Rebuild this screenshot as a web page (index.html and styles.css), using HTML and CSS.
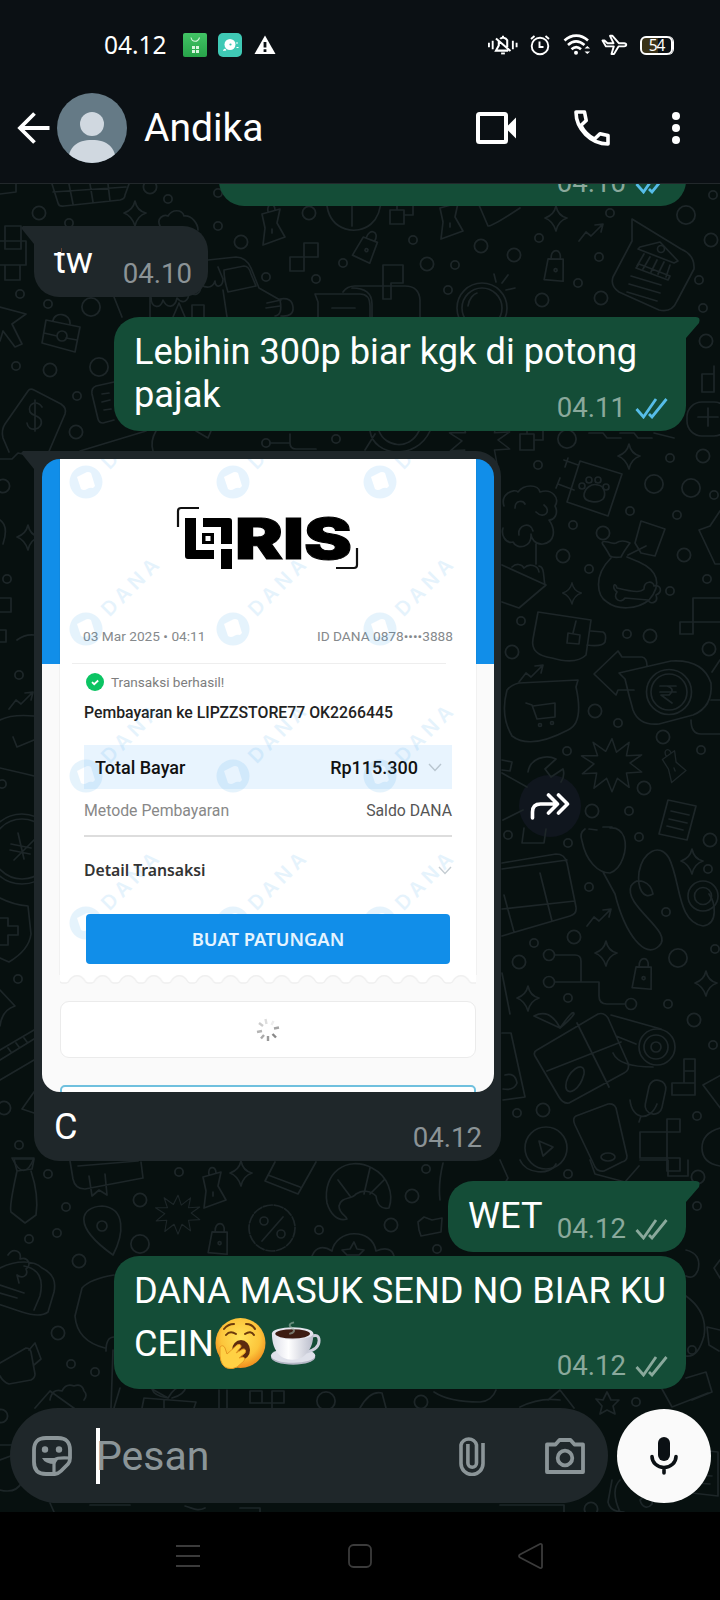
FILE: index.html
```html
<!DOCTYPE html>
<html lang="id">
<head>
<meta charset="utf-8">
<title>Andika</title>
<link rel="stylesheet" href="styles.css">
</head>
<body>
<header class="top">
  <div class="status">
    <span class="clock">04.12</span>
    <svg class="ic-store" width="24" height="24" viewBox="0 0 24 24"><defs><linearGradient id="g1" x1="0" y1="0" x2="0" y2="1"><stop offset="0" stop-color="#42c465"/><stop offset="1" stop-color="#28a44a"/></linearGradient></defs><rect width="24" height="24" rx="2" fill="url(#g1)"/><path d="M8 4.500c1 5 7 5 8.500 0" fill="none" stroke="#d9f5df" stroke-width="1.100"/><path d="M9 13h3v3H9zM13 13h3v3h-3zM9 17h3v3H9zM13 17h3v3h-3z" fill="#d9f5df"/></svg>
    <svg class="ic-app" width="24" height="24" viewBox="0 0 24 24"><rect width="24" height="24" rx="5" fill="#3fc9b5"/><circle cx="12" cy="11.500" r="5.500" fill="#fff"/><circle cx="12.500" cy="11.500" r="1.100" fill="#3fc9b5"/><path d="M5 17l2-1.500 1.500 1.500-1 .8H5zM18 9.500h2v1h-2zM18.500 14h2v1h-2z" fill="#fff"/></svg>
    <svg class="ic-warn" width="22" height="20" viewBox="0 0 22 20"><path d="M11 .5L21.500 19H.5z" fill="#fff"/><path d="M9.600 7h2.800v5.500H9.600zM9.600 14.300h2.800V17H9.600z" fill="#0b1014"/></svg>
    <span class="grow"></span>
    <svg width="30" height="22" viewBox="0 0 32 22" fill="none" stroke="#fff" stroke-width="2"><path d="M1 8.500v5M5 6.500v9M26.500 6.500v9M30.500 8.500v5"/><path d="M11.500 7v4.500L8.500 17h13M13 4.500C14.500 2.500 19 3 20.500 6v7M16 1v2M8.500 4L24 17.500" stroke-width="2.200"/><path d="M14 20h4"/></svg>
    <svg class="s-alarm" width="22" height="22" viewBox="0 0 22 22" fill="none" stroke="#fff" stroke-width="1.900"><circle cx="11" cy="12" r="8.300"/><path d="M10.500 7.500v5.500h4M2 5l3.500-3M20 5l-3.500-3"/></svg>
    <svg class="s-wifi" width="28" height="22" viewBox="0 0 28 22" fill="none" stroke="#fff" stroke-width="2.600"><path d="M1.500 6.500C8.500 0 18 0 25 6.500M5 11c5-4.500 11-4.500 16.500 0M8.500 15.200c3-2.700 6.500-2.700 9.500 0"/><circle cx="13" cy="18.800" r="2" fill="#fff" stroke="none"/><path d="M21.500 14.500l2.800-2.500 2.800 2.500zM21.500 17.500l2.800 2.500 2.800-2.500z" fill="#fff" stroke="none"/></svg>
    <svg class="s-plane" width="27" height="22" viewBox="0 0 27 22" fill="none" stroke="#fff" stroke-width="1.900" stroke-linejoin="round"><path d="M1.500 6.500h2l3 2.700h6L9 1.800h2.500l6.300 7.400H23c3 .3 3 2.900 0 3.200h-5.500L13 20h-2.500l2.300-7.600H5z"/></svg>
    <span class="battery">54</span>
  </div>
  <div class="bar">
    <svg class="back" width="33" height="32" viewBox="0 0 33 32" fill="none" stroke="#fff" stroke-width="3.800"><path d="M17.500 1.500L3 16l14.500 14.500M3 16h29.500"/></svg>
    <svg class="avatar" width="70" height="70" viewBox="0 0 70 70"><defs><clipPath id="av"><circle cx="35" cy="35" r="35"/></clipPath></defs><g clip-path="url(#av)"><rect width="70" height="70" fill="#657a86"/><circle cx="35" cy="31" r="12" fill="#d0d8e0"/><path d="M11 70c0-16 9-23 24-23s24 7 24 23z" fill="#d0d8e0"/></g></svg>
    <span class="name">Andika</span>
    <span class="grow"></span>
    <svg width="40" height="32" viewBox="0 0 40 32"><rect x="2" y="2" width="28" height="28" rx="1.500" fill="none" stroke="#fff" stroke-width="4"/><path d="M31 14.500l9-9v21l-9-9z" fill="#fff"/></svg>
    <svg class="phone" width="38" height="38" viewBox="0 0 38 38" fill="none" stroke="#fff" stroke-width="3.600" stroke-linejoin="round"><path d="M3 3h8.500l1.700 8.500-5.300 5C11 22.500 15.500 27 21.500 30l5.500-5.300 8 1.800V35C18 35 3 20 3 3z"/></svg>
    <svg class="more" width="8" height="32" viewBox="0 0 8 32" fill="#fff"><circle cx="4" cy="4" r="4"/><circle cx="4" cy="16" r="4"/><circle cx="4" cy="28" r="4"/></svg>
  </div>
</header>

<main class="chat">
  <svg class="wall" width="720" height="1328" viewBox="0 184 720 1328">
    <defs>
      <path id="star" d="M0-12Q2-2 11 0Q2 3 0 13Q-3 3-11 0Q-2-3 0-12z"/>
      <path id="burst" d="M0-27l5 15 14-11-3 15 17-1-13 9 13 10-17 1 3 16-13-10-6 15-6-15-14 11 3-17-16 1 13-11-14-9 18 0-5-15 14 10z"/>
      <path id="big" d="M91 307h0M686 215h0M99 367h0M567 439h0M654 484h0M691 488h0M678 958h0M140 1244h0M326 1401h0"/>
      <path id="mid" d="M39 213h0M150 187h0M241 242h0M309 213h0M427 264h0M481 246h0M514 255h0M542 300h0M601 298h0M711 240h0M706 341h0M50 370h0M76 432h0M703 456h0M603 533h0M563 556h0M684 555h0M650 636h0M709 649h0M512 652h0M595 711h0M663 737h0M644 788h0M592 811h0M710 840h0M574 937h0M519 962h0M694 1020h0M543 1110h0M140 1200h0M79 1261h0M412 1196h0M391 1225h0M698 1177h0M58 1333h0M1 1416h0M421 1402h0M591 1509h0M3 486h0M4 1108h0"/>
      <path id="small" d="M168 199h0M69 223h0M218 226h0M218 193h0M413 240h0M343 263h0M316 279h0M266 277h0M455 265h0M539 238h0M448 290h0M578 283h0M599 257h0M610 213h0M713 195h0M699 280h0M703 308h0M20 294h0M48 304h0M16 366h0M77 396h0M336 439h0M266 443h0M538 465h0M670 458h0M714 495h0M630 511h0M677 515h0M573 525h0M589 569h0M707 579h0M670 591h0M521 621h0M627 634h0M618 723h0M701 750h0M567 751h0M629 811h0M639 837h0M508 835h0M568 843h0M589 887h0M666 912h0M534 943h0M715 949h0M568 998h0M668 1004h0M713 1045h0M517 1113h0M697 1116h0M568 1174h0M48 1174h0M179 1172h0M66 1207h0M57 1233h0M29 1239h0M319 1230h0M437 1249h0M426 1169h0M697 1206h0M71 1364h0M95 1372h0M692 1350h0M636 1402h0M7 579h0M19 675h0M2 784h0M18 979h0M19 1145h0M708 869h0"/>
      <g id="bag"><path d="M-8-7L7-9 10 13-9 14zM-5-8c-2-10 9-12 9-1"/><circle cx="1" cy="3" r="1.500"/></g>
      <path id="pin" d="M-10-15l18-5-3 14 8 14-22 8 2-17zM-4-17c-2-9 7-10 7-2M0 0v4"/>
      <path id="zig" d="M-13 9l7-9 5 4L10-7M3-7l8-1-2 8"/>
      <path id="blocks" d="M0 0h14v14H0zM14 0h14v-14H14zM14 0v14"/>
    </defs>
    <g class="ring"><use href="#big" stroke-width="20"/><use href="#mid" stroke-width="15"/><use href="#small" stroke-width="10"/></g>
    <g class="hole"><use href="#big" stroke-width="16.400"/><use href="#mid" stroke-width="11.400"/><use href="#small" stroke-width="6.400"/></g>
    <g class="doodle">
      <use href="#star" x="135" y="213"/><use href="#star" x="556" y="218"/><use href="#star" x="629" y="456"/><use href="#star" transform="translate(572 593) scale(.85)"/><use href="#star" x="692" y="861"/><use href="#star" x="606" y="953"/><use href="#star" x="528" y="998"/><use href="#star" x="706" y="983"/><use href="#star" x="241" y="1173"/><use href="#star" x="28" y="537"/>
      <use href="#burst" transform="translate(612 763) scale(.9)"/><use href="#burst" transform="translate(178 1213) scale(.66)"/><use href="#burst" transform="translate(480 440) scale(.9)"/>
      <use href="#pin" x="272" y="229"/><use href="#pin" x="450" y="223"/><use href="#pin" transform="translate(674 768) rotate(-20) scale(.8)"/><use href="#pin" x="213" y="1192"/>
      <use href="#bag" transform="translate(367 247) rotate(28)"/><use href="#bag" transform="translate(555 267) rotate(8)"/><use href="#bag" transform="translate(643 975) rotate(8)"/><use href="#bag" transform="translate(219 1240) rotate(8)"/>
      <use href="#zig" x="592" y="232"/><use href="#zig" x="532" y="673"/><use href="#zig" x="600" y="917"/><use href="#zig" x="22" y="700"/>
      <use href="#blocks" x="290" y="257"/><path d="M390 210h14v14h-14zM397 210v-9h16v14h-9M383 265h20v18h-12v16h-8zM5 226h16v23H5zM0 241h26v24H0M5 265h15v15H5z"/>
      <path d="M52 184l6 19q1 4 6 3l56-6q5-1 5-5l4-11M53 192l73-5M69 184l4 20M90 184l3 18M108 184l2 17"/>
      <path d="M0 194l16-2V184M160 226c-4-8 4-12 8-10 4-7 14-7 16 0 8-1 14 8 14 14"/>
      <path d="M327 206c4 25 30 30 44 18 8-7 10-18 10-26M352 184v42M470 184l18 42q3 1 32-18"/>
      <path d="M632 219l49 30q14 6 13 20l-17 32q-5 12-18 9l-40-18q-9-6-6-15l19-36z"/>
      <path d="M640 247l20-5 18 19-4 2-36-14zM636 268l32 12 2-4-31-12zM644 254l-7 12M650 257l-7 12M657 260l-6 12M664 262l-6 12M670 265l-4 12M631 276l30 9M629 284l31 9M627 292l30 9"/><circle cx="661" cy="249" r="3.500"/>
      <path d="M114 297l8 20M208 260l28-3q10 0 15 11l8 20 21 12q3 15-5 16M224 270l20-4q5 0 7 8l5 12-28 6q-4-12-4-22zM151 297c0 12 10 12 12 3 4 9 12 8 14-2 6 7 12 3 12-6 6 5 12 2 12-7 7 4 12 2 14-4 0 8 8 6 8-2l-5-12M150 297v20M223 290l4 27M173 317l6-14 6 14M192 317v-12h12v12"/>
      <path d="M267 303l14-3M266 308l14-2M280 299q12-2 13 8t-12 9"/>
      <path d="M315 294h45q10 0 10 12v11M315 294l3 8v15M332 308h23M343 292q4-6 12-6h50q14 0 15 14v17M352 288q20 0 20 16v13"/>
      <circle cx="482" cy="308" r="25"/><circle cx="482" cy="308" r="20"/><path d="M494 274l2 8M502 283l6-8M506 290l9-2M468 306c1-8 6-12 9-13"/>
      <path d="M0 307l26 7-14 10 10 20-7 3-12-16-3 10M46 320l34 7-5 25-33-9zM53 321c1-10 18-8 17 3M44 333l13 3M66 338l11 2"/><circle cx="62" cy="336" r="5"/>
      <path d="M28 391q2-3 6-1l27 14q6 4 4 10l-18 42M28 391L5 424q-4 6-2 14l6 14M42 407c-5-8-15-3-12 5 2 4 9 3 11 8 3 10-13 13-14 3M35 400v31"/>
      <path d="M114 382l-18 4q-5 2-4 8l6 25q1 4 5 4l11-3M102 394l7-1M102 402l8-2M104 410l7-1M80 451l66-20M153 451q-3-10 3-20M196 431l12 7 3-7"/>
      <path d="M270 443h20v-9M290 443q0 6 6 6h20M365 450l10-16M370 431c4 26 46 30 60 0M379 431c6 16 30 20 40 0M520 434h14v16h-14zM527 434v-8h16v14h-9M589 433h14l4 5h14M620 433h14l4 5h14M654 433l20 5"/>
      <rect x="687" y="402" width="42" height="34" rx="15"/><path d="M698 417h20M708 408v18M702 374h12v18h-12zM714 366v20"/>
      <!-- pet shop -->
      <path d="M580 461l42 13-14 42-41-14zM564 460l14 5M558 484l16 6M560 478l-4 10M568 458l-3 9"/><path d="M584 496c0-8 8-13 14-11 7 1 8 10 5 14-5 5-18 3-19-3z"/><circle cx="582" cy="486" r="3"/><circle cx="589" cy="480" r="3"/><circle cx="598" cy="480" r="3"/><circle cx="606" cy="487" r="3"/>
      <path d="M504 506c-4-12 10-18 14-14 6-8 20-8 22 0 12-4 20 6 15 14 4 8-1 14-6 14 7 10 6 22-6 24-8 1-12-6-12-10 1 14-14 16-18 8-8 2-12-8-10-14M515 508c0-8 8-8 10-4M536 512c8 8 16-1 8-7M519 535c-2-10 12-14 14-4M536 544v20"/>
      <path d="M502 565l44 20-27 23-17-6M512 567c4-4 10-3 12 1 5-5 14-3 15 4M545 585c-2-8 0-18-6-19"/>
      <path d="M604 546q-5-6 4-4 6 2 8 1 6-4 14 0-6 8-9 14-8 1-11-1-2-4-6-10zM611 558c-18 18-14 38-4 44 10 8 30 8 42-2 14-16 8-30-10-38l-12-5M641 521l24 8-10 27-14-3-6-10zM628 555l18-9"/>
      <path d="M617 588c20 5 24 4 27 1 0-9 10-8 10-3 7-2 9 6 2 9 3 8-6 10-8 5l-23-2c-4 6-13 1-8-6-6-5-2-11 0-4z"/>
      <path d="M538 612l53 8-5 35q-10 10-34 3-22-3-19-19zM591 631l12 1q4 2 2 10-3 5-18 3M576 621l-3 12M568 633l12 2-1 9-12-1z"/>
      <path d="M720 511l-10 15-11 4 16 34h5M693 598h28M693 598v36h-13v-12h40M720 660l-8 12"/>
      <path d="M594 674l24-23 4 6h20q5 1 5 9M594 674l22 21 2-5h16M619 673l52-12q32-2 40 22 2 24-18 32l-34 9q-20 2-26-14-4-14-8-31z"/><circle cx="669" cy="692" r="22.500"/><circle cx="669" cy="692" r="18"/><path d="M660 686h16M660 692h16M667 686q9 3 2 9h-8l11 8"/>
      <path d="M507 690q4-5 12-7l59-3 -2 7q8 36-8 43-38 20-56 6-12-20-5-46zM526 703l6 2 5 14 18-2 0-14-22 3"/><circle cx="540" cy="725" r="1.500"/><circle cx="552" cy="723" r="1.500"/>
      <path d="M691 720q0 14 10 14h20M711 700h9M502 760l10 2-2 9-8-1M502 773l25 14M528 772c2-14 18-18 28-13l-11 10 6 8 12-8c2 6 0 10-2 13M503 820l20-10M524 828l-2 15h22l2-14"/>
      <path d="M668 800l28 6-9 34-28-6zM671 811l18 4M669 819l18 4M667 826l16 4"/>
      <path d="M502 863l54-9q9 0 11 9l9 44q1 7-6 9l-68 20M502 869l65-9M502 909l73-8M504 895l10 37M540 873l12 48"/>
      <path d="M585 829q-6 4-3 12c4 20 16 32 28 32 12-4 18-24 14-36q-4-10-14-9M589 829l8 1M603 827l9 0M603 872l12 22c10 40 30 66 44 52 16-14-36-40-28-60 6-10 20-4 22 8-10 6-16-6-14-22 4-20 20-30 30-14 12 24 8 64 34 68 16-2 12-24 6-32"/><circle cx="703" cy="896" r="15"/><circle cx="703" cy="896" r="8.500"/>
      <path d="M555 955h20q6 0 6 6v20M555 982h44v14q0 8 8 8h18"/><circle cx="549" cy="955" r="5.500"/><circle cx="549" cy="982" r="5.500"/><circle cx="631" cy="1004" r="5.500"/>
      <path d="M537 1050l61-36q6-2 10 4l20 45q2 7-4 10l-55 30q-6 1-10-6l-24-41q-2-4 2-6zM547 1071l74-29M577 1023l32 64M560 1028q-10-20-26-12l26 12q14-20 14-14-4 6-14 14M566 1088c-2-16 20-30 18-14-4 16-16 22-18 14zM611 1015l50 14M616 1036l20 8M613 1053q6 14 40 14"/><circle cx="657" cy="1047" r="18"/><circle cx="656" cy="1047" r="12"/><circle cx="656" cy="1047" r="5"/>
      <path d="M684 1059h11v36h-23v-12h23M684 1059v24M684 1071h11"/>
      <rect x="647" y="1080" width="17" height="34" rx="8" transform="rotate(12 655 1097)"/><path d="M630 1100c2 20 20 22 27 4M641 1116l-2 6"/>
      <path d="M576 1116l32-12q6-1 8 4l11 48q0 5-5 6l-18 9q-6 1-9-4l-20-42q-3-7 1-9z"/><ellipse cx="608" cy="1157" rx="7" ry="4"/><circle cx="546" cy="1148" r="21"/><path d="M539 1141l14 6-10 9z"/>
      <path d="M640 1132h27v26h-27zM667 1119h13v13h-13zM667 1158h13v13h-13zM703 1085l20-11M703 1085l18 24M720 1128q-18 5-18 20t18 18M502 973l8 41M502 1033l9 0 14 64-22 3M505 1075q10-3 12 8-3 8-14 6"/>
      <!-- left edge -->
      <path d="M0 459h12l6-6 14 3M0 520q9 6 3 24M0 598h11v14H0M0 630h6v12H0M17 640q8-6 17-5M0 720q12-6 34-4M13 737l4 10 17-7M0 768l26 6 8 2"/>
      <circle cx="22" cy="849" r="35"/><circle cx="22" cy="849" r="30"/><path d="M18 833l6 26M10 850l20 4M11 844l20 4M36 838L14 860"/>
      <path d="M0 898q14 7 28 8l3 28q-2 16-22 28l-9-4M0 918h8v8h10v9H8v10H0M0 990l15 16q-13 4-15 20M0 1050l34-20M0 1060l34-21M8 1048l3 4M16 1043l3 4M24 1038l3 4M0 1080l34-20M34 1092l-12 17 12 4M12 1158h22q-10 25-22 0z"/>
      <!-- lower wall -->
      <path d="M14 1159l20 0-2 10-15 2zM17 1171q-8 36-6 41l14 11 11-8q3-20-5-44M70 1161l3 18q2 10 12 10l58-11-2-16M78 1166l60-5M89 1176l3 20 7-6 8 5-2-21"/>
      <path d="M275 1162l-10 19 33 13 18-32M268 1175l32 12"/>
      <path d="M327 1203c-5-30 20-48 45-35 16 8 22 26 17 40-8 2-12-4-13-12-6-6-14-6-20-2-4 6-15 2-17 12 0 8 8 10 8 13-10 3-17-6-20-16zM338 1180l12 16M370 1168l-6 26M384 1180l-14 14"/>
      <path d="M440 1200q-2-16 3-37M500 1160l8 18-6 10M520 1160c6 14 30 16 36 4M590 1160l5 14 30 8 14-16M640 1160h28v16h20v-16"/>
      <path d="M113 1255c-42-30-32-48-11-49 24 2 22 28 11 49z"/><circle cx="102" cy="1226" r="5"/>
      <circle cx="272" cy="1228" r="23" stroke-dasharray="9 2"/><circle cx="264" cy="1221" r="4"/><circle cx="281" cy="1234" r="4"/><path d="M283 1217l-21 24"/>
      <path d="M312 1256c4-10 12-10 20-5 4-22 40-24 44 0 10-4 16-2 18 5M354 1242l3 7 7 1-5 5h-12l-5-5 8-1zM418 1222l6-5 8 3 10-2-1 14-20 4-2-6z"/>
      <path d="M0 1268c16-8 34-8 42 0 12 6 14 14 12 24l-6 20q-8 6-26 0l-24-8M8 1255c5-8 14-4 12 4 8-3 12 6 6 10 3 7-4 10-9 6l2 8M0 1285l24 8M0 1293l17 5M24 1266q22 4 16 30l-6 14"/>
      <path d="M114 1275q-24 4-32 13l-7 28q2 25 30 32M106 1351q0-14 8-14M0 1363l26-15q4 0 5 4l4 22q0 4-4 6l-22 4q-6-2-9-8M29 1350l6-7 6 16-7 6"/>
      <path d="M50 1400q2-12 12-9 4-8 12-5 8-3 10 5 4 4 0 9M35 1408l15-17 28 20M113 1350l-2 58M120 1388l-6 20M142 1408l2-10 52 4-2 6M164 1400v8M168 1398q-14-2-16-9l16 9q8-14 18-11-2 8-14 11M219 1390v18M227 1390v18M250 1391h12v12h-12zM272 1391h12v12h-12zM262 1403h10v5"/>
      <path d="M360 1408q10-18 22-15l4 15M434 1392q15 10 46 10 12-1 16-12M520 1407q20-10 40-7M548 1400l12-10 14 18M596 1399l7 1 4-8 4 8 8 0-6 6 2 8-8-4-7 4 2-8zM662 1389l10 18 36-14M686 1250q16 4 12 20-4 10-12 6M686 1296q22 16 18 40-6 22-18 20M686 1378l20-6 6 20-20 8M720 1260l-6 8 6 10M720 1330l-13-3 2 18 10 6"/>
      <path d="M0 1445h14M0 1460l16-6M0 1490q16 4 22-8M620 1480q-10 10 0 32M612 1480l-4 22q2 10 16 10M640 1500c4-5 14-4 12 4-4 5-10 4-12-4zM700 1450l18 2v44l-26-3M696 1475l16 1M696 1483l14 1M50 1503l4 9M90 1505h40M185 1506c8 2 12 6 20 2M240 1508h20v4M500 1505h64v7"/>
    </g>
  </svg>

  <div class="bubble out clipped"><div class="meta">04.10<svg class="ticks blue" width="33" height="22" viewBox="0 0 33 22"><path d="M1.500 12l7 8L21 2M14 17l3 3L31.500 2"/></svg></div></div>

  <div class="bubble in tail-in tw"><div class="text">tw</div><div class="meta">04.10</div></div>

  <div class="bubble out tail-out leb"><div class="text">Lebihin 300p biar kgk di potong<br>pajak</div><div class="meta">04.11<svg class="ticks blue" width="33" height="22" viewBox="0 0 33 22"><path d="M1.500 12l7 8L21 2M14 17l3 3L31.500 2"/></svg></div></div>

  <div class="photo-row">
    <div class="in tail-in photo-bubble">
      <div class="photo">
        <div class="receipt">
          <div class="qris">
            <svg width="184" height="64" viewBox="0 0 184 64" role="img" aria-label="QRIS"><g fill="none" stroke="#111" stroke-width="2.200"><path d="M2 21V5q0-3 3-3h18M160 62h18q3 0 3-3V42"/></g><path d="M9 12h11v32h18v9H12q-3 0-3-3z M27 12h26q3 0 3 3v23H45V21H27z M45 43h11v20H45z"/><path d="M26 27h12v11H26zM29.500 30v5h5v-5z" fill-rule="evenodd"/><text class="ris" x="59" y="53" textLength="117" lengthAdjust="spacingAndGlyphs">RIS</text></svg>
          </div>
          <div class="row meta-row"><span class="date">03 Mar 2025 • 04:11</span><span class="id">ID DANA 0878••••3888</span></div>
          <div class="hair"></div>
          <div class="ok"><svg width="18" height="18" viewBox="0 0 18 18"><circle cx="9" cy="9" r="9" fill="#0bc463"/><path d="M6 9.200l2.200 2 4-3.700" fill="none" stroke="#fff" stroke-width="1.800"/></svg><span>Transaksi berhasil!</span></div>
          <div class="payee"><span>Pembayaran ke LIPZZSTORE77 OK2266445</span></div>
          <div class="row total"><span class="tb">Total Bayar</span><span class="rp">Rp115.300</span><svg width="14" height="9" viewBox="0 0 14 9" fill="none" stroke="#b9c6d0" stroke-width="1.400"><path d="M1 1l6 6.500L13 1"/></svg></div>
          <div class="row method"><span class="mp">Metode Pembayaran</span><span class="sd">Saldo DANA</span></div>
          <div class="row detail"><span>Detail Transaksi</span><svg width="14" height="9" viewBox="0 0 14 9" fill="none" stroke="#c4ccd2" stroke-width="1.400"><path d="M1 1l6 6.500L13 1"/></svg></div>
          <div class="button"><span>BUAT PATUNGAN</span></div>
          <svg class="marks" width="416" height="506" viewBox="60 459 416 506">
            <defs><g id="mark"><path fill-rule="evenodd" d="M16.500 0A16.500 16.500 0 1 1-16.500 0A16.500 16.500 0 1 1 16.500 0zM-9-5l4 12q3 2 6 0 3-2 6-1l2-2-4-13q-3-2-6 0-4 2-8 4z"/><text class="wm" x="0" y="0" transform="translate(23.500 -11.500) rotate(-45)" textLength="72">DANA</text></g></defs>
            <use href="#mark" x="86" y="482"/><use href="#mark" x="233" y="482"/><use href="#mark" x="380" y="482"/>
            <use href="#mark" x="86" y="629"/><use href="#mark" x="233" y="629"/><use href="#mark" x="380" y="629"/>
            <use href="#mark" x="86" y="776"/><use href="#mark" x="233" y="776"/><use href="#mark" x="380" y="776"/>
            <use href="#mark" x="86" y="923"/><use href="#mark" x="233" y="923"/><use href="#mark" x="380" y="923"/>
          </svg>
        </div>
        <svg class="scallop" width="416" height="10" viewBox="0 0 416 10"><defs><pattern id="sc" width="25.600" height="10" x="2" patternUnits="userSpaceOnUse"><path d="M0 0v8h4q2 0 3-2c4-7 12-7 16 0q1 2 3 2V0z" fill="#fff"/><path d="M0 8h4q2 0 3-2c4-7 12-7 16 0q1 2 3 2" fill="none" stroke="#efefef" stroke-width="1.500"/></pattern></defs><rect width="416" height="10" fill="url(#sc)"/></svg>
        <div class="loading"><svg width="24" height="24" viewBox="-12 -12 24 24" stroke-width="2.400"><path d="M0 6v5" stroke="#999"/><path d="M4.500 4l3.500 3.500" stroke="#888"/><path d="M6-1.500l5-1" stroke="#a5a5a5"/><path d="M3.500-5l2-4" stroke="#eee"/><path d="M-1.500-6l-1-5" stroke="#ddd"/><path d="M-5-4l-4-3" stroke="#ccc"/><path d="M-6 1l-5 1" stroke="#b5b5b5"/><path d="M-4 5l-3 3.500" stroke="#aaa"/></svg></div>
        <div class="next"></div>
      </div>
      <div class="caption"><div class="text">C</div><div class="meta">04.12</div></div>
    </div>
    <div class="forward"><svg width="40" height="28" viewBox="0 0 40 28" fill="none" stroke="#fff" stroke-width="3.600" stroke-linecap="round" stroke-linejoin="round"><path d="M2.500 26v-6q0-8 8-8H27M18.500 3l9 9-9 9M28.500 3l9 9-9 9"/></svg></div>
  </div>

  <div class="bubble out tail-out wet"><div class="text">WET</div><div class="meta">04.12<svg class="ticks" width="33" height="22" viewBox="0 0 33 22"><path d="M1.500 12l7 8L21 2M14 17l3 3L31.500 2"/></svg></div></div>

  <div class="bubble out dana"><div class="text"><span class="l1">DANA MASUK SEND NO BIAR KU</span><div class="line2">CEIN<svg class="yawn" width="52" height="52" viewBox="0 0 52 52" role="img" aria-label="🥱"><defs><radialGradient id="yf" cx=".5" cy=".4" r=".6"><stop offset="0" stop-color="#ffe35a"/><stop offset=".65" stop-color="#fcc53b"/><stop offset="1" stop-color="#f08c1d"/></radialGradient></defs><circle cx="26.500" cy="26" r="25" fill="url(#yf)"/><path d="M10 12q4-5 10-5M32 7q6 0 9 5M12 18q4-5 10-1M31 17q6-4 9 1" fill="none" stroke="#6b3a0c" stroke-width="2" stroke-linecap="round"/><ellipse cx="27" cy="33" rx="9" ry="10" fill="#5c2a0e"/><path d="M6 30q3-3 5 1l2 6 10-9q4-2 4 2l-5 6 7-4q4 0 2 4l-6 5 4-1q3 1 1 4l-7 6q-5 3-10 1-6-2-7-12z" fill="#ffd144" stroke="#e89a22" stroke-width="1"/></svg><svg class="cup" width="52" height="45" viewBox="0 0 54 46" role="img" aria-label="☕"><defs><linearGradient id="cg"><stop offset="0" stop-color="#dcdde8"/><stop offset=".4" stop-color="#fff"/><stop offset="1" stop-color="#b9bccb"/></linearGradient></defs><ellipse cx="24" cy="37" rx="23" ry="8" fill="#b4b7c5"/><ellipse cx="24" cy="35.500" rx="23" ry="7.500" fill="#dfe1ea"/><path d="M42 16q9-4 9 4 0 9-13 12" fill="none" stroke="#cdd0dc" stroke-width="3"/><path d="M2 13c0 15 7 27 21 27s22-12 22-27z" fill="url(#cg)"/><ellipse cx="23.500" cy="12.500" rx="21.500" ry="6.500" fill="#e4e5ee"/><ellipse cx="23.500" cy="13" rx="18" ry="4.800" fill="#3c1b12"/><path d="M20 13q8-2 3-6-6-4 2-6" fill="none" stroke="#9eb5aa" stroke-opacity=".6" stroke-width="2"/></svg></div></div><div class="meta">04.12<svg class="ticks" width="33" height="22" viewBox="0 0 33 22"><path d="M1.500 12l7 8L21 2M14 17l3 3L31.500 2"/></svg></div></div>

  <div class="composer">
    <div class="field">
      <svg class="sticker" width="40" height="40" viewBox="0 0 40 40" fill="none" stroke="#8b9598" stroke-width="3.800"><path d="M38 22V14Q38 2 26 2H14Q2 2 2 14v12q0 12 12 12h9q3 0 6-3l7-7q2-2 2-6z"/><path d="M38 22q-16-1-16 3v12" stroke-width="3.200"/><circle cx="13" cy="13.500" r="3.200" fill="#8b9598" stroke="none"/><circle cx="27" cy="13.500" r="3.200" fill="#8b9598" stroke="none"/><path d="M10 22h17l-4 6q-10 0-13-6z" fill="#8b9598" stroke="none"/></svg>
      <span class="caret"></span><span class="ph">Pesan</span>
      <span class="grow"></span>
      <svg class="clip" width="26" height="41" viewBox="0 0 26 41" fill="none" stroke="#8b9598" stroke-width="3.600"><path d="M24 8v20.500a11 11 0 0 1-22 0V10a8 8 0 0 1 15.500 0v18a4.300 4.300 0 0 1-8.600 0V9"/></svg>
      <svg class="cam" width="40" height="36" viewBox="0 0 40 36" fill="none" stroke="#8b9598" stroke-width="3.800" stroke-linejoin="round"><path d="M2 6.500h8.500L14.500 2h11l4 4.500H38V34H2z"/><circle cx="20" cy="20" r="7.300"/></svg>
    </div>
    <div class="mic"><svg width="28" height="38" viewBox="0 0 28 38"><rect x="8" y="0" width="12" height="24" rx="6" fill="#0b1014"/><path d="M2 19.500a12 11 0 0 0 24 0M14 30.500V36" fill="none" stroke="#0b1014" stroke-width="3.600" stroke-linecap="round"/></svg></div>
  </div>
</main>

<nav class="nav">
  <svg class="n1" width="24" height="24" viewBox="0 0 24 24" fill="none" stroke="#3b3b3b" stroke-width="2"><path d="M0 2h24M0 12h24M0 22h24"/></svg>
  <svg class="n2" width="24" height="24" viewBox="0 0 24 24" fill="none" stroke="#3b3b3b" stroke-width="1.800"><rect x="1" y="1" width="22" height="22" rx="4.500"/></svg>
  <svg class="n3" width="25" height="26" viewBox="0 0 25 26" fill="none" stroke="#3b3b3b" stroke-width="1.800" stroke-linejoin="round"><path d="M2 11.500L22 1q2-.5 2 1.500v21q0 2-2 1.500L2 14.500q-2-1.500 0-3z"/></svg>
</nav>
</body>
</html>
```
FILE: styles.css
```css
* { box-sizing: border-box; }
body { margin: 0; width: 720px; height: 1600px; overflow: hidden; background: #000; font-family: Roboto, "Liberation Sans", sans-serif; color: #fff; }
svg { display: block; flex: none; }
.grow { flex: 1; }

.top { height: 184px; background: #0b1014; border-bottom: 1px solid #22282b; }
.status { height: 88px; display: flex; align-items: center; padding: 2px 47px 0 104px; }
.clock { font: 24.5px/30px "Noto Sans", sans-serif; width: 79px; }
.ic-app { margin-left: 11px; }
.ic-warn { margin-left: 12px; }
.s-alarm { margin-left: 11px; }
.s-wifi { margin-left: 12px; }
.s-plane { margin-left: 10px; }
.battery { margin-left: 12px; width: 33px; height: 19px; border: 2px solid #fff; border-radius: 6px; background: linear-gradient(90deg, #3a3218 54%, transparent 54%); font: 15.5px/15px "Noto Sans", sans-serif; letter-spacing: -1px; text-align: center; box-shadow: 1px 0 0 #fff; }
.bar { height: 80px; display: flex; align-items: center; padding: 0 40px 0 17px; }
.avatar { margin-left: 7px; }
.name { margin-left: 17px; font-size: 39px; line-height: 46px; }
.phone { margin-left: 57px; }
.more { margin-left: 61px; }

.chat { position: relative; height: 1328px; background: #07100f; display: flex; flex-direction: column; overflow: hidden; }
.wall { position: absolute; left: 0; top: 0; }
.ring, .hole, .doodle { fill: none; stroke-linecap: round; stroke-linejoin: round; }
.ring { stroke: #1d2628; }
.hole { stroke: #07100f; }
.doodle { stroke: #1d2628; stroke-width: 1.7; }

.bubble { position: relative; display: flex; border-radius: 25px; padding: 12.5px 18px 7px 20px; flex: none; }
.in { background: #1f272a; }
.out { background: #144d37; align-self: flex-end; margin-right: 34px; }
.text { flex: 1; min-width: 0; white-space: nowrap; font-size: 36.2px; line-height: 43px; }
.meta { align-self: flex-end; display: flex; align-items: center; font-size: 27.6px; line-height: 32px; color: #8b9396; }
.out .meta { color: #8aa99c; }
.ticks { margin-left: 9px; fill: none; stroke: #8aa99c; stroke-width: 2.8; }
.ticks.blue { stroke: #56bde8; }
.tail-in::before { content: ""; position: absolute; left: -13px; top: 0; width: 40px; height: 26px; background: #1f272a; clip-path: polygon(0 2px, 2px 0, 100% 0, 100% 100%, 13px 100%, 13px 18px); }
.tail-out::before { content: ""; position: absolute; right: -14px; top: 0; width: 40px; height: 26px; background: #144d37; clip-path: path("M0 0H36Q41 0 39 6L26 21V26H0Z"); }

.clipped { width: 467px; height: 92px; margin-top: -70px; justify-content: flex-end; }
.tw { width: 174px; height: 71px; margin: 20px 0 0 34px; padding-right: 16px; }
.leb { width: 572px; height: 114px; margin-top: 20px; }
.wet { width: 238px; height: 71px; margin-top: 20px; }
.dana { width: 572px; height: 133px; margin-top: 4px; }

.photo-row { display: flex; align-items: center; margin: 20px 0 0 34px; height: 710px; flex: none; }
.photo-bubble { position: relative; width: 467px; height: 710px; border-radius: 25px; padding: 8px 7px 0 8px; }
.photo { position: relative; width: 452px; height: 633px; border-radius: 18px; overflow: hidden; background: linear-gradient(#118ee9 205px, #fafafa 205px); padding: 0 18px; font-family: Roboto, sans-serif; }
.caption { display: flex; height: 69px; padding: 12.5px 12px 7px 12px; }
.forward { margin-left: 18px; width: 62px; height: 62px; border-radius: 50%; background: #10161e; display: flex; align-items: center; justify-content: center; }

.receipt { position: relative; height: 516px; background: #fff; padding: 0 24px; color: #222; white-space: nowrap; box-shadow: -1px 0 0 rgba(0,0,0,.035), 1px 0 0 rgba(0,0,0,.035); }
.qris { padding: 47px 0 0 92px; height: 167px; }
.ris { font: 900 57px/1 Inter, sans-serif; stroke: #000; stroke-width: 1px; }
.row { display: flex; justify-content: space-between; align-items: center; }
.meta-row { height: 20px; font-size: 13.7px; color: #85898c; margin: 0 -1px; }
.hair { height: 1px; background: #eee; margin: 17px 6px 0 -12px; }
.ok { display: flex; align-items: center; gap: 7px; margin: 9px 0 0 2px; height: 18px; font-size: 13.6px; color: #7d7d7d; }
.payee { margin-top: 11px; height: 22px; line-height: 22px; font-size: 15.8px; font-weight: 500; }
.total { margin-top: 21px; height: 44px; background: #e8f4fe; padding: 0 10px 0 11px; font-size: 18px; font-weight: 500; color: #111; }
.total svg { margin-left: 10px; }
.rp { margin-left: auto; }
.method { height: 48px; font-size: 15.8px; color: #888; border-bottom: 2px solid #ddd; padding-bottom: 4px; }
.sd { color: #555; }
.detail { height: 66px; font: 600 15.8px/20px "Noto Sans", sans-serif; letter-spacing: -.05px; color: #333; }
.button { position: relative; z-index: 1; margin: 11px 2px 0; height: 50px; border-radius: 4px; background: #118ee9; color: #e4f4ff; font: 600 18.4px/50px "Noto Sans", sans-serif; text-align: center; }
.marks { position: absolute; left: 0; top: 0; fill: #118ee9; opacity: .1; }
.wm { font: 600 20px Inter, sans-serif; }
.loading { margin-top: 16px; height: 57px; border: 1.5px solid #ebebeb; border-radius: 9px; background: #fff; display: flex; align-items: center; justify-content: center; }
.next { margin-top: 27px; height: 30px; border: 2px solid #6fc0de; border-radius: 5px; background: #fff; }

.l1 { display: block; }
.line2 { display: flex; align-items: center; height: 53px; margin-top: 5px; line-height: 53px; }
.cup { margin-left: 4px; }

.composer { position: relative; display: flex; margin: 19px 9px 0 10px; justify-content: space-between; }
.field { width: 598px; height: 95px; border-radius: 48px; background: #1f272a; display: flex; align-items: center; padding: 0 23px 0 22px; }
.caret { width: 4px; height: 56px; background: #fff; margin-left: 24px; }
.ph { font-size: 41px; line-height: 56px; color: #8b9598; margin-left: -4px; }
.cam { margin-left: 60px; }
.mic { width: 94px; height: 94px; margin-top: 1px; border-radius: 50%; background: #fafafa; display: flex; align-items: center; justify-content: center; }

.nav { height: 88px; background: #000; display: flex; align-items: center; padding-left: 176px; }
.n2 { margin-left: 148px; }
.n3 { margin-left: 146px; }
```
